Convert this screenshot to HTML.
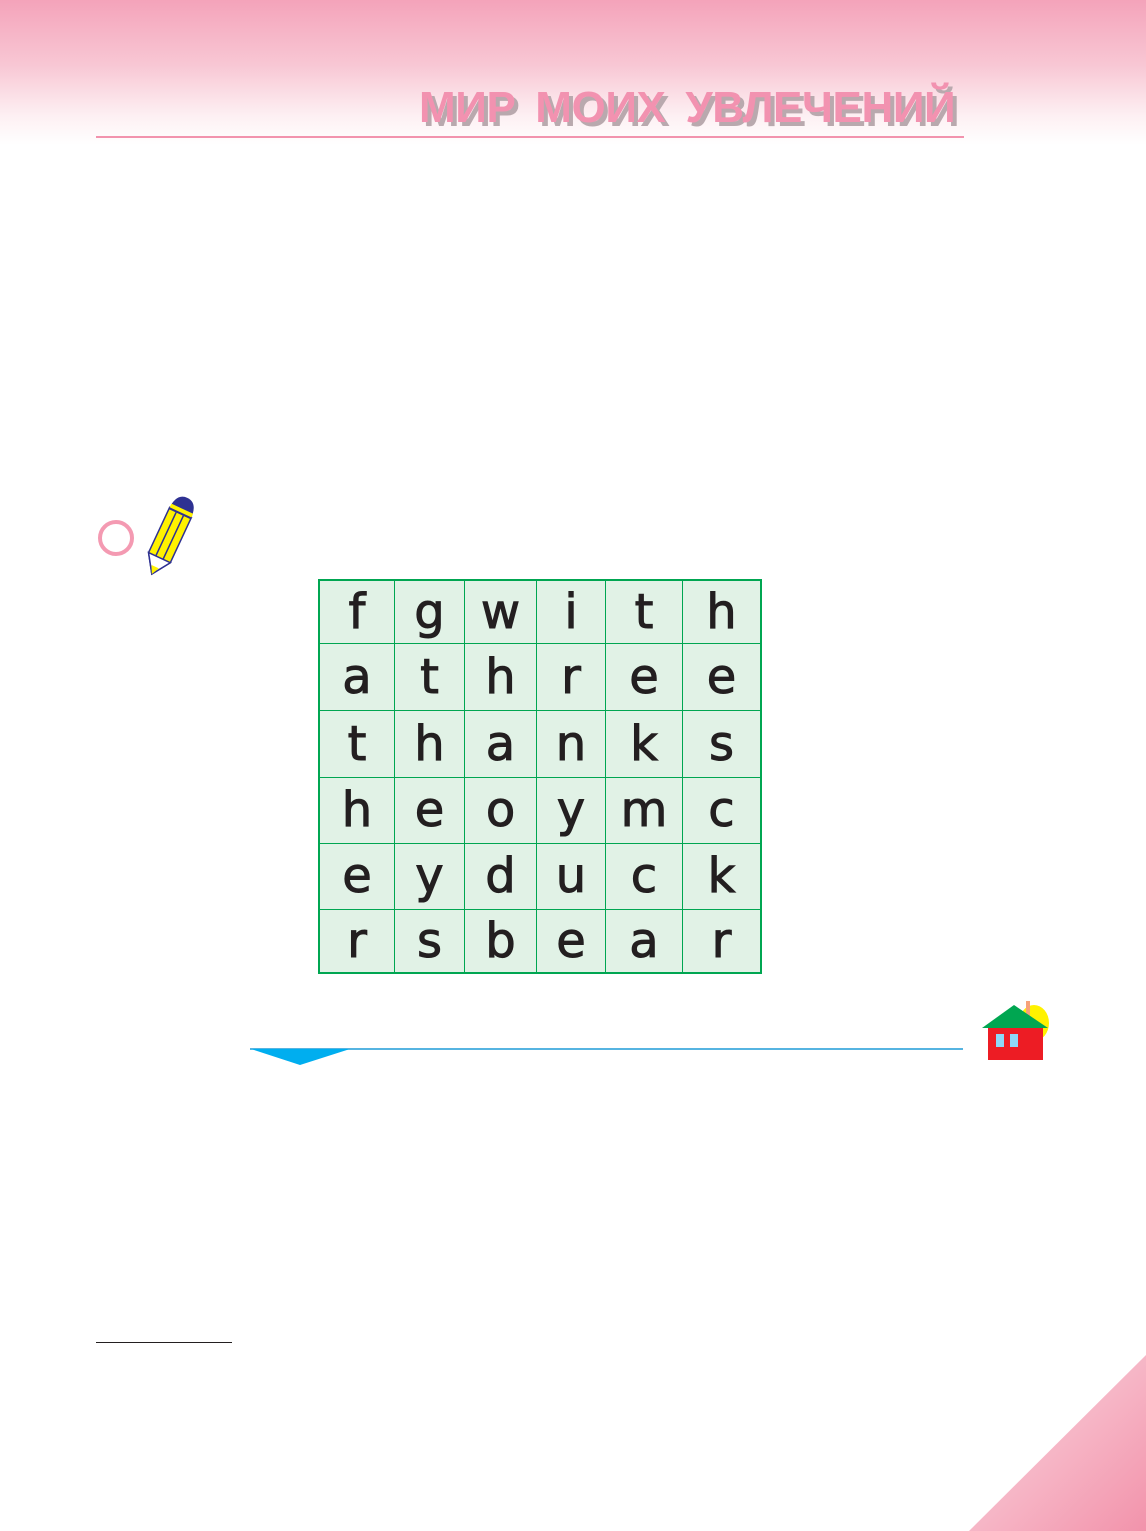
<!DOCTYPE html>
<html><head><meta charset="utf-8"><style>
body{margin:0;width:1146px;height:1531px;position:relative;background:#fff;overflow:hidden;font-family:"Liberation Sans",sans-serif}
.hdr{position:absolute;left:0;top:0;width:1146px;height:145px;background:linear-gradient(#f4a3ba 0%,#f8c7d4 45%,#fdf0f3 80%,#fff 100%)}
.title{position:absolute;left:419px;top:83px;font-weight:bold;font-size:44px;color:#f292b0;letter-spacing:-0.4px;text-shadow:4px 4px 0 #b9a9ae;white-space:nowrap;word-spacing:8px}
.hline{position:absolute;left:96px;top:136px;width:868px;height:2px;background:#f293ae}
table{position:absolute;left:318px;top:579px;border-collapse:collapse;border:2px solid #00a651;background:#e1f2e6}
td{border:1.5px solid #00a651;text-align:center;font-family:"DejaVu Sans",sans-serif;font-size:48px;color:#231f20;padding:0;line-height:1;-webkit-text-stroke:1px #231f20}
</style></head><body>
<div class="hdr"></div>
<div class="title">МИР МОИХ УВЛЕЧЕНИЙ</div>
<div class="hline"></div>
<svg style="position:absolute;left:90px;top:490px" width="110" height="90">
<circle cx="26" cy="48" r="16" fill="none" stroke="#f49ab2" stroke-width="4"/>
<g transform="rotate(25 80 45)">
<polygon points="68,20 92,20 92,70 80,88 68,70" fill="#fff200" stroke="#2e3192" stroke-width="1.5"/>
<path d="M76 22V70 M84 22V70" stroke="#2e3192" stroke-width="1.5"/>
<polygon points="68,70 92,70 80,88" fill="#fff" stroke="#2e3192" stroke-width="1.5"/>
<polygon points="76,80 84,80 80,88" fill="#fff200"/>
<path d="M68 22 Q68 4 80 4 Q92 4 92 22Z" fill="#2e3192"/>
<rect x="68" y="16" width="24" height="4" fill="#fff200"/>
</g></svg>
<table>
<tr style="height:63px"><td style="width:74px">f</td><td style="width:69px">g</td><td style="width:71px">w</td><td style="width:68px">i</td><td style="width:76px">t</td><td style="width:77px">h</td></tr>
<tr style="height:67px"><td>a</td><td>t</td><td>h</td><td>r</td><td>e</td><td>e</td></tr>
<tr style="height:67px"><td>t</td><td>h</td><td>a</td><td>n</td><td>k</td><td>s</td></tr>
<tr style="height:66px"><td>h</td><td>e</td><td>o</td><td>y</td><td>m</td><td>c</td></tr>
<tr style="height:66px"><td>e</td><td>y</td><td>d</td><td>u</td><td>c</td><td>k</td></tr>
<tr style="height:64px"><td>r</td><td>s</td><td>b</td><td>e</td><td>a</td><td>r</td></tr>
</table>
<svg style="position:absolute;left:240px;top:995px" width="820" height="80">
<line x1="10" y1="54" x2="723" y2="54" stroke="#1e9bd7" stroke-width="1.5"/>
<polygon points="11,54 110,54 60,70" fill="#00aeef"/>
<ellipse cx="794" cy="28" rx="15" ry="18" fill="#fff200"/>
<rect x="786" y="6" width="4" height="20" fill="#f7a27a"/>
<rect x="748" y="32" width="55" height="33" fill="#ed1c24"/>
<polygon points="742,33 774,10 808,33" fill="#00a651"/>
<rect x="756" y="39" width="8" height="13" fill="#8ed8f8"/>
<rect x="770" y="39" width="8" height="13" fill="#8ed8f8"/>
</svg>
<div style="position:absolute;left:96px;top:1342px;width:136px;height:1px;background:#231f20"></div>
<svg style="position:absolute;left:0;top:0" width="1146" height="1531">
<defs><linearGradient id="g" x1="0" y1="0" x2="1" y2="1"><stop offset="0" stop-color="#fbdbe3"/><stop offset="1" stop-color="#f293ab"/></linearGradient></defs>
<polygon points="1146,1355 1146,1531 969,1531" fill="url(#g)"/>
</svg>
</body></html>
